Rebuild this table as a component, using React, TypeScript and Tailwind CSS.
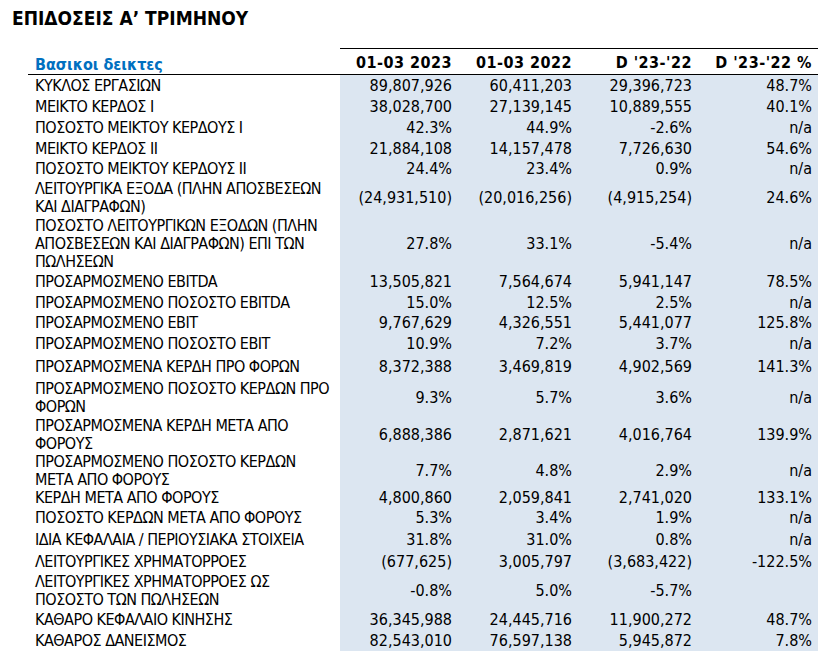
import React from "react";

type Row = { label: React.ReactNode; v: string[]; h: string };

const rows: Row[] = [
  { label: "ΚΥΚΛΟΣ ΕΡΓΑΣΙΩΝ", v: ["89,807,926", "60,411,203", "29,396,723", "48.7%"], h: "h-[20px]" },
  { label: "ΜΕΙΚΤΟ ΚΕΡΔΟΣ Ι", v: ["38,028,700", "27,139,145", "10,889,555", "40.1%"], h: "h-[21px]" },
  { label: "ΠΟΣΟΣΤΟ ΜΕΙΚΤΟΥ ΚΕΡΔΟΥΣ Ι", v: ["42.3%", "44.9%", "-2.6%", "n/a"], h: "h-[21px]" },
  { label: "ΜΕΙΚΤΟ ΚΕΡΔΟΣ ΙΙ", v: ["21,884,108", "14,157,478", "7,726,630", "54.6%"], h: "h-[21px]" },
  { label: "ΠΟΣΟΣΤΟ ΜΕΙΚΤΟΥ ΚΕΡΔΟΥΣ ΙΙ", v: ["24.4%", "23.4%", "0.9%", "n/a"], h: "h-[20px]" },
  {
    label: (
      <>
        ΛΕΙΤΟΥΡΓΙΚΑ ΕΞΟΔΑ (ΠΛΗΝ ΑΠΟΣΒΕΣΕΩΝ
        <br />
        ΚΑΙ ΔΙΑΓΡΑΦΩΝ)
      </>
    ),
    v: ["(24,931,510)", "(20,016,256)", "(4,915,254)", "24.6%"],
    h: "h-[37px]",
  },
  {
    label: (
      <>
        ΠΟΣΟΣΤΟ ΛΕΙΤΟΥΡΓΙΚΩΝ ΕΞΟΔΩΝ (ΠΛΗΝ
        <br />
        ΑΠΟΣΒΕΣΕΩΝ ΚΑΙ ΔΙΑΓΡΑΦΩΝ) ΕΠΙ ΤΩΝ
        <br />
        ΠΩΛΗΣΕΩΝ
      </>
    ),
    v: ["27.8%", "33.1%", "-5.4%", "n/a"],
    h: "h-[56px]",
  },
  { label: "ΠΡΟΣΑΡΜΟΣΜΕΝΟ EBITDA", v: ["13,505,821", "7,564,674", "5,941,147", "78.5%"], h: "h-[20px]" },
  { label: "ΠΡΟΣΑΡΜΟΣΜΕΝΟ ΠΟΣΟΣΤΟ EBITDA", v: ["15.0%", "12.5%", "2.5%", "n/a"], h: "h-[21px]" },
  { label: "ΠΡΟΣΑΡΜΟΣΜΕΝΟ EBIT", v: ["9,767,629", "4,326,551", "5,441,077", "125.8%"], h: "h-[20px]" },
  { label: "ΠΡΟΣΑΡΜΟΣΜΕΝΟ ΠΟΣΟΣΤΟ EBIT", v: ["10.9%", "7.2%", "3.7%", "n/a"], h: "h-[22px]" },
  { label: "ΠΡΟΣΑΡΜΟΣΜΕΝΑ ΚΕΡΔΗ ΠΡΟ ΦΟΡΩΝ", v: ["8,372,388", "3,469,819", "4,902,569", "141.3%"], h: "h-[24px]" },
  {
    label: (
      <>
        ΠΡΟΣΑΡΜΟΣΜΕΝΟ ΠΟΣΟΣΤΟ ΚΕΡΔΩΝ ΠΡΟ
        <br />
        ΦΟΡΩΝ
      </>
    ),
    v: ["9.3%", "5.7%", "3.6%", "n/a"],
    h: "h-[37px]",
  },
  {
    label: (
      <>
        ΠΡΟΣΑΡΜΟΣΜΕΝΑ ΚΕΡΔΗ ΜΕΤΑ ΑΠΟ
        <br />
        ΦΟΡΟΥΣ
      </>
    ),
    v: ["6,888,386", "2,871,621", "4,016,764", "139.9%"],
    h: "h-[37px]",
  },
  {
    label: (
      <>
        ΠΡΟΣΑΡΜΟΣΜΕΝΟ ΠΟΣΟΣΤΟ ΚΕΡΔΩΝ
        <br />
        ΜΕΤΑ ΑΠΟ ΦΟΡΟΥΣ
      </>
    ),
    v: ["7.7%", "4.8%", "2.9%", "n/a"],
    h: "h-[35px]",
  },
  { label: "ΚΕΡΔΗ ΜΕΤΑ ΑΠΟ ΦΟΡΟΥΣ", v: ["4,800,860", "2,059,841", "2,741,020", "133.1%"], h: "h-[19px]" },
  { label: "ΠΟΣΟΣΤΟ ΚΕΡΔΩΝ ΜΕΤΑ ΑΠΟ ΦΟΡΟΥΣ", v: ["5.3%", "3.4%", "1.9%", "n/a"], h: "h-[22px]" },
  { label: "ΙΔΙΑ ΚΕΦΑΛΑΙΑ / ΠΕΡΙΟΥΣΙΑΚΑ ΣΤΟΙΧΕΙΑ", v: ["31.8%", "31.0%", "0.8%", "n/a"], h: "h-[22px]" },
  { label: "ΛΕΙΤΟΥΡΓΙΚΕΣ ΧΡΗΜΑΤΟΡΡΟΕΣ", v: ["(677,625)", "3,005,797", "(3,683,422)", "-122.5%"], h: "h-[21px]" },
  {
    label: (
      <>
        ΛΕΙΤΟΥΡΓΙΚΕΣ ΧΡΗΜΑΤΟΡΡΟΕΣ ΩΣ
        <br />
        ΠΟΣΟΣΤΟ ΤΩΝ ΠΩΛΗΣΕΩΝ
      </>
    ),
    v: ["-0.8%", "5.0%", "-5.7%", ""],
    h: "h-[38px]",
  },
  { label: "ΚΑΘΑΡΟ ΚΕΦΑΛΑΙΟ ΚΙΝΗΣΗΣ", v: ["36,345,988", "24,445,716", "11,900,272", "48.7%"], h: "h-[20px]" },
  { label: "ΚΑΘΑΡΟΣ ΔΑΝΕΙΣΜΟΣ", v: ["82,543,010", "76,597,138", "5,945,872", "7.8%"], h: "h-[22px]" },
];

const widths = ["w-[120px]", "w-[120px]", "w-[120px]", "w-[118px]"];

export default function App() {
  return (
    <div
      className="w-[833px] h-[672px] bg-white text-black overflow-hidden"
      style={{ fontFamily: '"DejaVu Sans Condensed", "DejaVu Sans", sans-serif' }}
    >
      <div className="pl-[12px] pt-[7px] h-[48px] text-[19px] leading-[22px] font-bold">
        ΕΠΙΔΟΣΕΙΣ Α’ ΤΡΙΜΗΝΟΥ
      </div>
      <div className="ml-[28px] w-[790px] text-[16px]">
        <div className="flex h-[27px] border-b border-black">
          <div className="w-[312px] pl-[7px] flex items-end leading-[18px] text-[#0070c0] font-bold">
            Βασικοι δεικτες
          </div>
          <div className="flex border-t border-black font-bold tracking-[0.5px]">
            {["01-03 2023", "01-03 2022", "D '23-'22", "D '23-'22 %"].map((h, i) => (
              <div
                key={i}
                className={`${widths[i]} flex items-center justify-end pt-[2px] ${i < 3 ? "pr-[8px]" : "pr-[6px]"}`}
              >
                {h}
              </div>
            ))}
          </div>
        </div>
        {rows.map((r, idx) => (
          <div key={idx} className={`flex ${r.h}`}>
            <div className="w-[312px] pl-[7px] pt-[2px] flex items-center leading-[18px] whitespace-nowrap tracking-[-0.5px]">
              <div>{r.label}</div>
            </div>
            {r.v.map((v, i) => (
              <div
                key={i}
                className={`${widths[i]} bg-[#dce6f1] pt-[2px] flex items-center justify-end whitespace-nowrap ${i < 3 ? "pr-[8px]" : "pr-[6px]"}`}
              >
                {v}
              </div>
            ))}
          </div>
        ))}
      </div>
    </div>
  );
}
